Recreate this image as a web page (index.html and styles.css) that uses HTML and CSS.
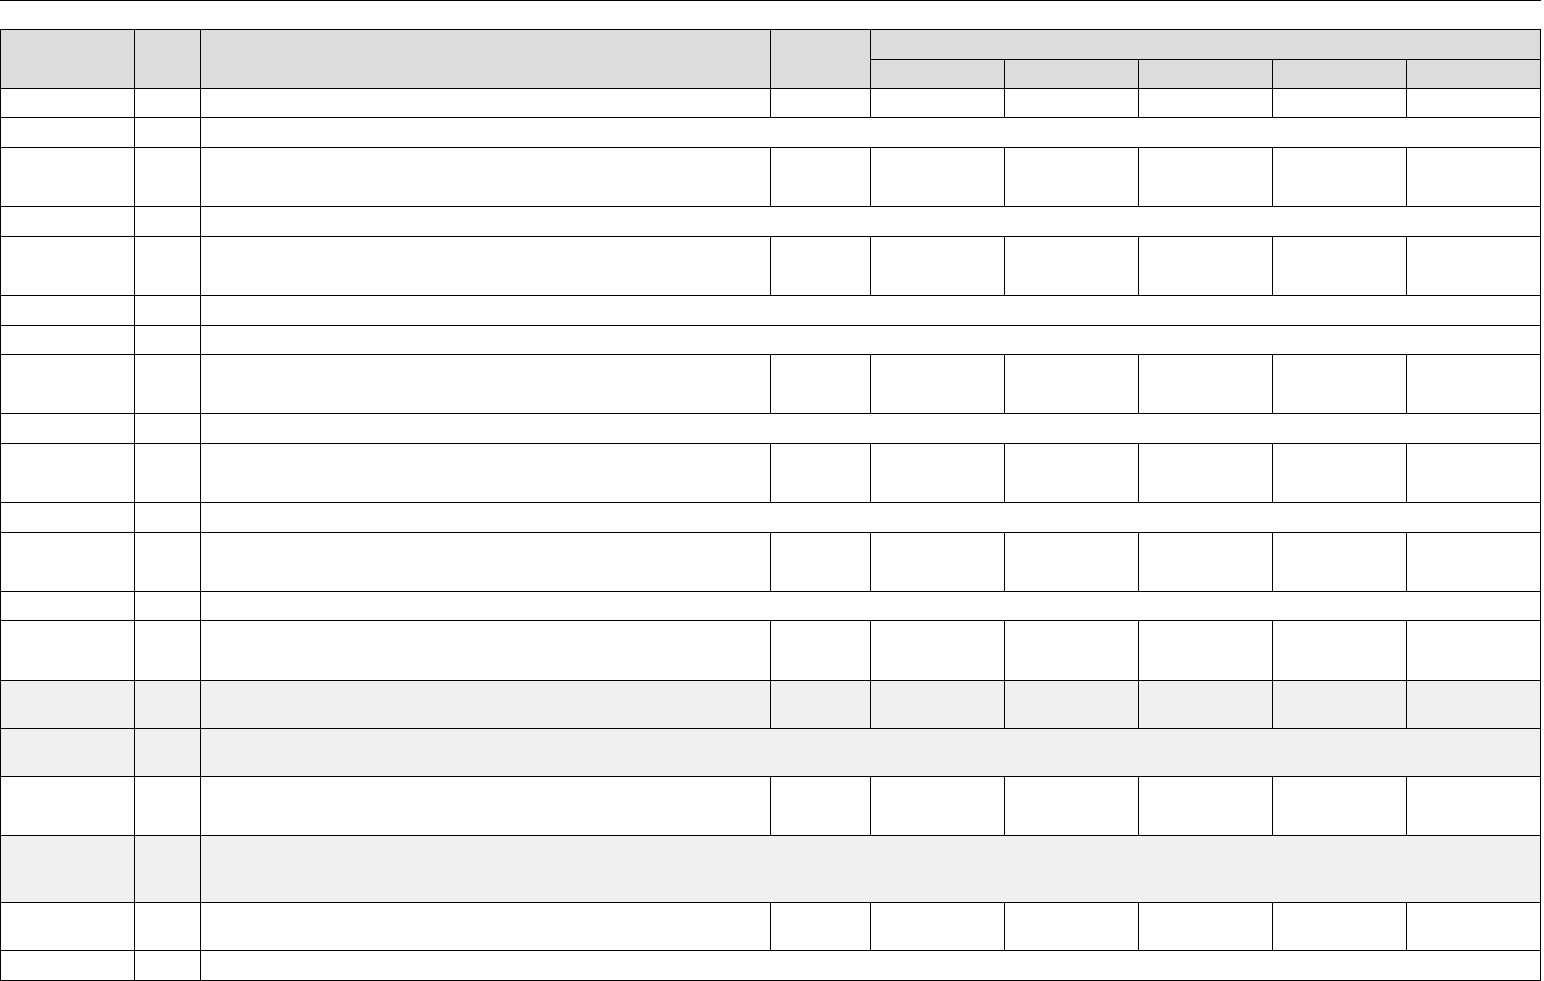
FILE: index.html
```html
<!DOCTYPE html>
<html lang="en">
<head>
<meta charset="utf-8">
<title>Table</title>
<link rel="stylesheet" href="styles.css">
</head>
<body>
<div class="page">
  <table class="grid">
    <colgroup>
      <col class="c-a"><col class="c-b"><col class="c-c"><col class="c-d">
      <col class="c-e"><col class="c-e"><col class="c-e"><col class="c-e"><col class="c-e">
    </colgroup>
    <thead>
      <tr class="h1">
        <th rowspan="2"></th><th rowspan="2"></th><th rowspan="2"></th><th rowspan="2"></th>
        <th colspan="5"></th>
      </tr>
      <tr class="h2">
        <th></th><th></th><th></th><th></th><th></th>
      </tr>
    </thead>
    <tbody>
      <tr class="s"><td></td><td></td><td></td><td></td><td></td><td></td><td></td><td></td><td></td></tr>
      <tr class="s"><td></td><td></td><td colspan="7"></td></tr>
      <tr class="d"><td></td><td></td><td></td><td></td><td></td><td></td><td></td><td></td><td></td></tr>
      <tr class="s"><td></td><td></td><td colspan="7"></td></tr>
      <tr class="d"><td></td><td></td><td></td><td></td><td></td><td></td><td></td><td></td><td></td></tr>
      <tr class="s"><td></td><td></td><td colspan="7"></td></tr>
      <tr class="s"><td></td><td></td><td colspan="7"></td></tr>
      <tr class="d"><td></td><td></td><td></td><td></td><td></td><td></td><td></td><td></td><td></td></tr>
      <tr class="s"><td></td><td></td><td colspan="7"></td></tr>
      <tr class="d"><td></td><td></td><td></td><td></td><td></td><td></td><td></td><td></td><td></td></tr>
      <tr class="s"><td></td><td></td><td colspan="7"></td></tr>
      <tr class="d"><td></td><td></td><td></td><td></td><td></td><td></td><td></td><td></td><td></td></tr>
      <tr class="s"><td></td><td></td><td colspan="7"></td></tr>
      <tr class="d"><td></td><td></td><td></td><td></td><td></td><td></td><td></td><td></td><td></td></tr>
      <tr class="m shade"><td></td><td></td><td></td><td></td><td></td><td></td><td></td><td></td><td></td></tr>
      <tr class="m shade"><td></td><td></td><td colspan="7"></td></tr>
      <tr class="d"><td></td><td></td><td></td><td></td><td></td><td></td><td></td><td></td><td></td></tr>
      <tr class="t shade"><td></td><td></td><td colspan="7"></td></tr>
      <tr class="m"><td></td><td></td><td></td><td></td><td></td><td></td><td></td><td></td><td></td></tr>
      <tr class="s"><td></td><td></td><td colspan="7"></td></tr>
    </tbody>
  </table>
</div>
</body>
</html>
```

FILE: styles.css
```css
html, body {
  margin: 0;
  padding: 0;
  background: #fff;
  font-family: "Liberation Sans", Arial, sans-serif;
  font-size: 14px;
}
.page {
  width: 1541px;
  border-top: 1px solid #000;
  padding-top: 28px;
}
.grid {
  width: 1541px;
  table-layout: fixed;
  border-collapse: collapse;
}
.grid th, .grid td {
  border: 1px solid #000;
  padding: 0;
}
.grid th {
  background: #dcdcdc;
}
.c-a { width: 134px; }
.c-b { width: 66px; }
.c-c { width: 570px; }
.c-d { width: 100px; }
.c-e { width: 134px; }
.h1 { height: 30.3px; }
.h2 { height: 28.7px; }
.s { height: 29.5px; }
.d { height: 59.3px; }
.m { height: 48px; }
.t { height: 67px; }
.shade td { background: #f0f0f0; }
```
